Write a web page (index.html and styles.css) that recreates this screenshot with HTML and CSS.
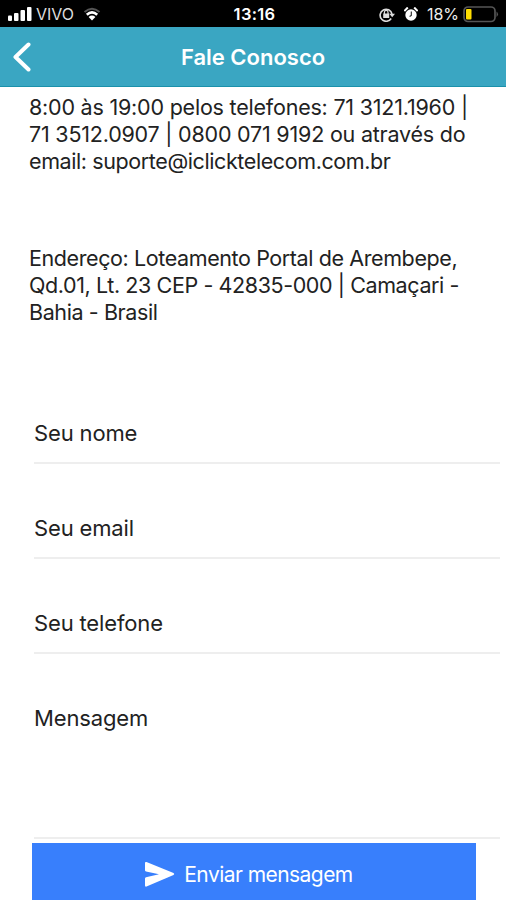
FILE: index.html
```html
<!DOCTYPE html>
<html lang="pt-BR">

<head>
    <meta charset="utf-8">
    <title>Fale Conosco</title>
    <link rel="stylesheet" href="styles.css">
</head>

<body>
    <div class="status-bar">
        <div class="status-left">
            <svg class="signal" width="24" height="15" viewBox="0 0 24 15" fill="#fff">
                <rect x="0" y="8.5" width="4" height="5.5" rx="1" />
                <rect x="6" y="6" width="4.5" height="8" rx="1" />
                <rect x="12.5" y="3" width="4.5" height="11" rx="1" />
                <rect x="19" y="0" width="4.5" height="14" rx="1" />
            </svg>
            <span class="carrier">VIVO</span>
            <svg class="wifi" width="18" height="14" viewBox="0 0 18 14" fill="none">
                <path d="M1.5 5Q9-1.5 16.5 5" stroke="#555" stroke-width="2" />
                <path d="M3.8 7.8Q9 3 14.2 7.8" stroke="#fff" stroke-width="2.6" />
                <path d="M9 13.5L5.6 10Q9 7.2 12.4 10Z" fill="#fff" />
            </svg>
        </div>
        <div class="clock">13:16</div>
        <div class="status-right">
            <svg class="lock" width="17" height="15" viewBox="0 0 17 15" fill="none" stroke="#ddd">
                <path d="M12.2 11.5A6 6 0 1 1 13 7" stroke-width="1.6" />
                <path d="M10.3 6.8H16L13.2 10.2Z" fill="#ddd" stroke="none" />
                <rect x="4.2" y="6.5" width="6" height="4.5" fill="#ddd" stroke="none" />
                <path d="M5.4 7V5.2a1.8 1.8 0 0 1 3.6 0V7" stroke-width="1.2" />
            </svg>
            <svg class="alarm" width="14" height="14" viewBox="0 0 14 14" fill="#fff">
                <circle cx="7" cy="8" r="5.7" />
                <path d="M.3 4L3.8.5M13.7 4L10.2.5" stroke="#fff" stroke-width="2" />
                <path d="M7.3 4.5V8.4L5.6 9.5" fill="none" stroke="#222" stroke-width="1.1" />
            </svg>
            <span class="percent">18%</span>
            <svg class="battery" width="36" height="17" viewBox="0 0 36 17">
                <rect x="1" y="1" width="31" height="14.5" rx="4" fill="none" stroke="#555" stroke-width="1.7" />
                <rect x="3" y="3" width="5.5" height="10.5" rx="1" fill="#fd0" />
                <path d="M33.5 5.5Q36.5 8.2 33.5 11Z" fill="#555" />
            </svg>
        </div>
    </div>

    <header class="navbar">
        <svg class="back" width="20" height="30" viewBox="0 0 20 30" fill="none">
            <path d="M16.5 2.5L3.5 15L16.5 27.5" stroke="#fff" stroke-width="4" stroke-linecap="round" stroke-linejoin="round" />
        </svg>
        <h1>Fale Conosco</h1>
    </header>

    <main>
        <p class="info phones">8:00 às 19:00 pelos telefones: 71 3121.1960 |<br>71 3512.0907 | 0800 071 9192 ou através do<br><span class="tight">email: suporte@iclicktelecom.com.br</span></p>
        <p class="info address tight">Endereço: Loteamento Portal de Arembepe,<br>Qd.01, Lt. 23 CEP - 42835-000 | Camaçari -<br>Bahia - Brasil</p>

        <form>
            <div class="field">Seu nome</div>
            <div class="field">Seu email</div>
            <div class="field">Seu telefone</div>
            <div class="field message">Mensagem</div>
            <button type="button" class="send">
                <svg width="31" height="27" viewBox="0 0 31 27">
                    <path d="M1 2Q1 .5 2.5 1L29.5 12Q31 13 29.5 14L2.5 25.5Q1 26 1 24.5V17.5Q1 16.4 2 16.2L15 13.2L2 10.4Q1 10.2 1 9.2Z" fill="#fff" />
                </svg>
                <span>Enviar mensagem</span>
            </button>
        </form>
    </main>
</body>

</html>
```

FILE: styles.css
```css
* {
    box-sizing: border-box;
}

body {
    margin: 0;
    height: 900px;
    overflow: hidden;
    background: #fff;
    color: #222;
    font-family: Inter, sans-serif;
}

.status-bar {
    display: grid;
    grid-template-columns: 1fr auto 1fr;
    align-items: center;
    height: 27px;
    padding: 1px 7px 0 8px;
    background: #000;
    color: #fff;
    font-size: 16px;
}

.status-left,
.status-right {
    display: flex;
    align-items: center;
}

.status-right {
    justify-content: flex-end;
}

.carrier {
    margin-left: 4px;
    color: #ddd;
}

.wifi {
    margin-left: 9px;
}

.clock {
    padding-left: 2px;
    font-weight: 600;
    font-size: 16.5px;
    letter-spacing: 0.3px;
}

.alarm {
    margin-left: 8px;
}

.percent {
    margin: 0 4px 0 9px;
    color: #eee;
}

.navbar {
    display: grid;
    grid-template-columns: 40px 1fr 40px;
    align-items: center;
    height: 60px;
    background: #3aa6c2;
    border-bottom: 1px solid #1b91ab;
    color: #fff;
}

.back {
    margin-left: 12px;
}

h1 {
    margin: 0;
    font-size: 22px;
    font-weight: 600;
    text-align: center;
}

.info {
    margin: 0 0 0 29px;
    font-size: 21.5px;
    font-weight: 400;
    line-height: 27px;
    letter-spacing: -0.21px;
    white-space: nowrap;
}

.tight {
    letter-spacing: -0.4px;
}

.phones {
    padding-top: 7px;
}

.address {
    margin-top: 70px;
}

form {
    padding-top: 43px;
}

.field {
    height: 95px;
    margin: 0 6px 0 34px;
    padding-top: 49px;
    border-bottom: 2px solid #eee;
    font-size: 22px;
    font-weight: 400;
    line-height: 30px;
    letter-spacing: -0.15px;
}

.message {
    height: 185px;
}

.send {
    display: flex;
    align-items: center;
    justify-content: center;
    gap: 9px;
    width: 444px;
    height: 62px;
    margin: 4px 0 0 32px;
    padding: 0 11px 0 0;
    border: 0;
    background: #387ffc;
    color: #fff;
    font-family: inherit;
    font-size: 21px;
    letter-spacing: -0.55px;
}
```
